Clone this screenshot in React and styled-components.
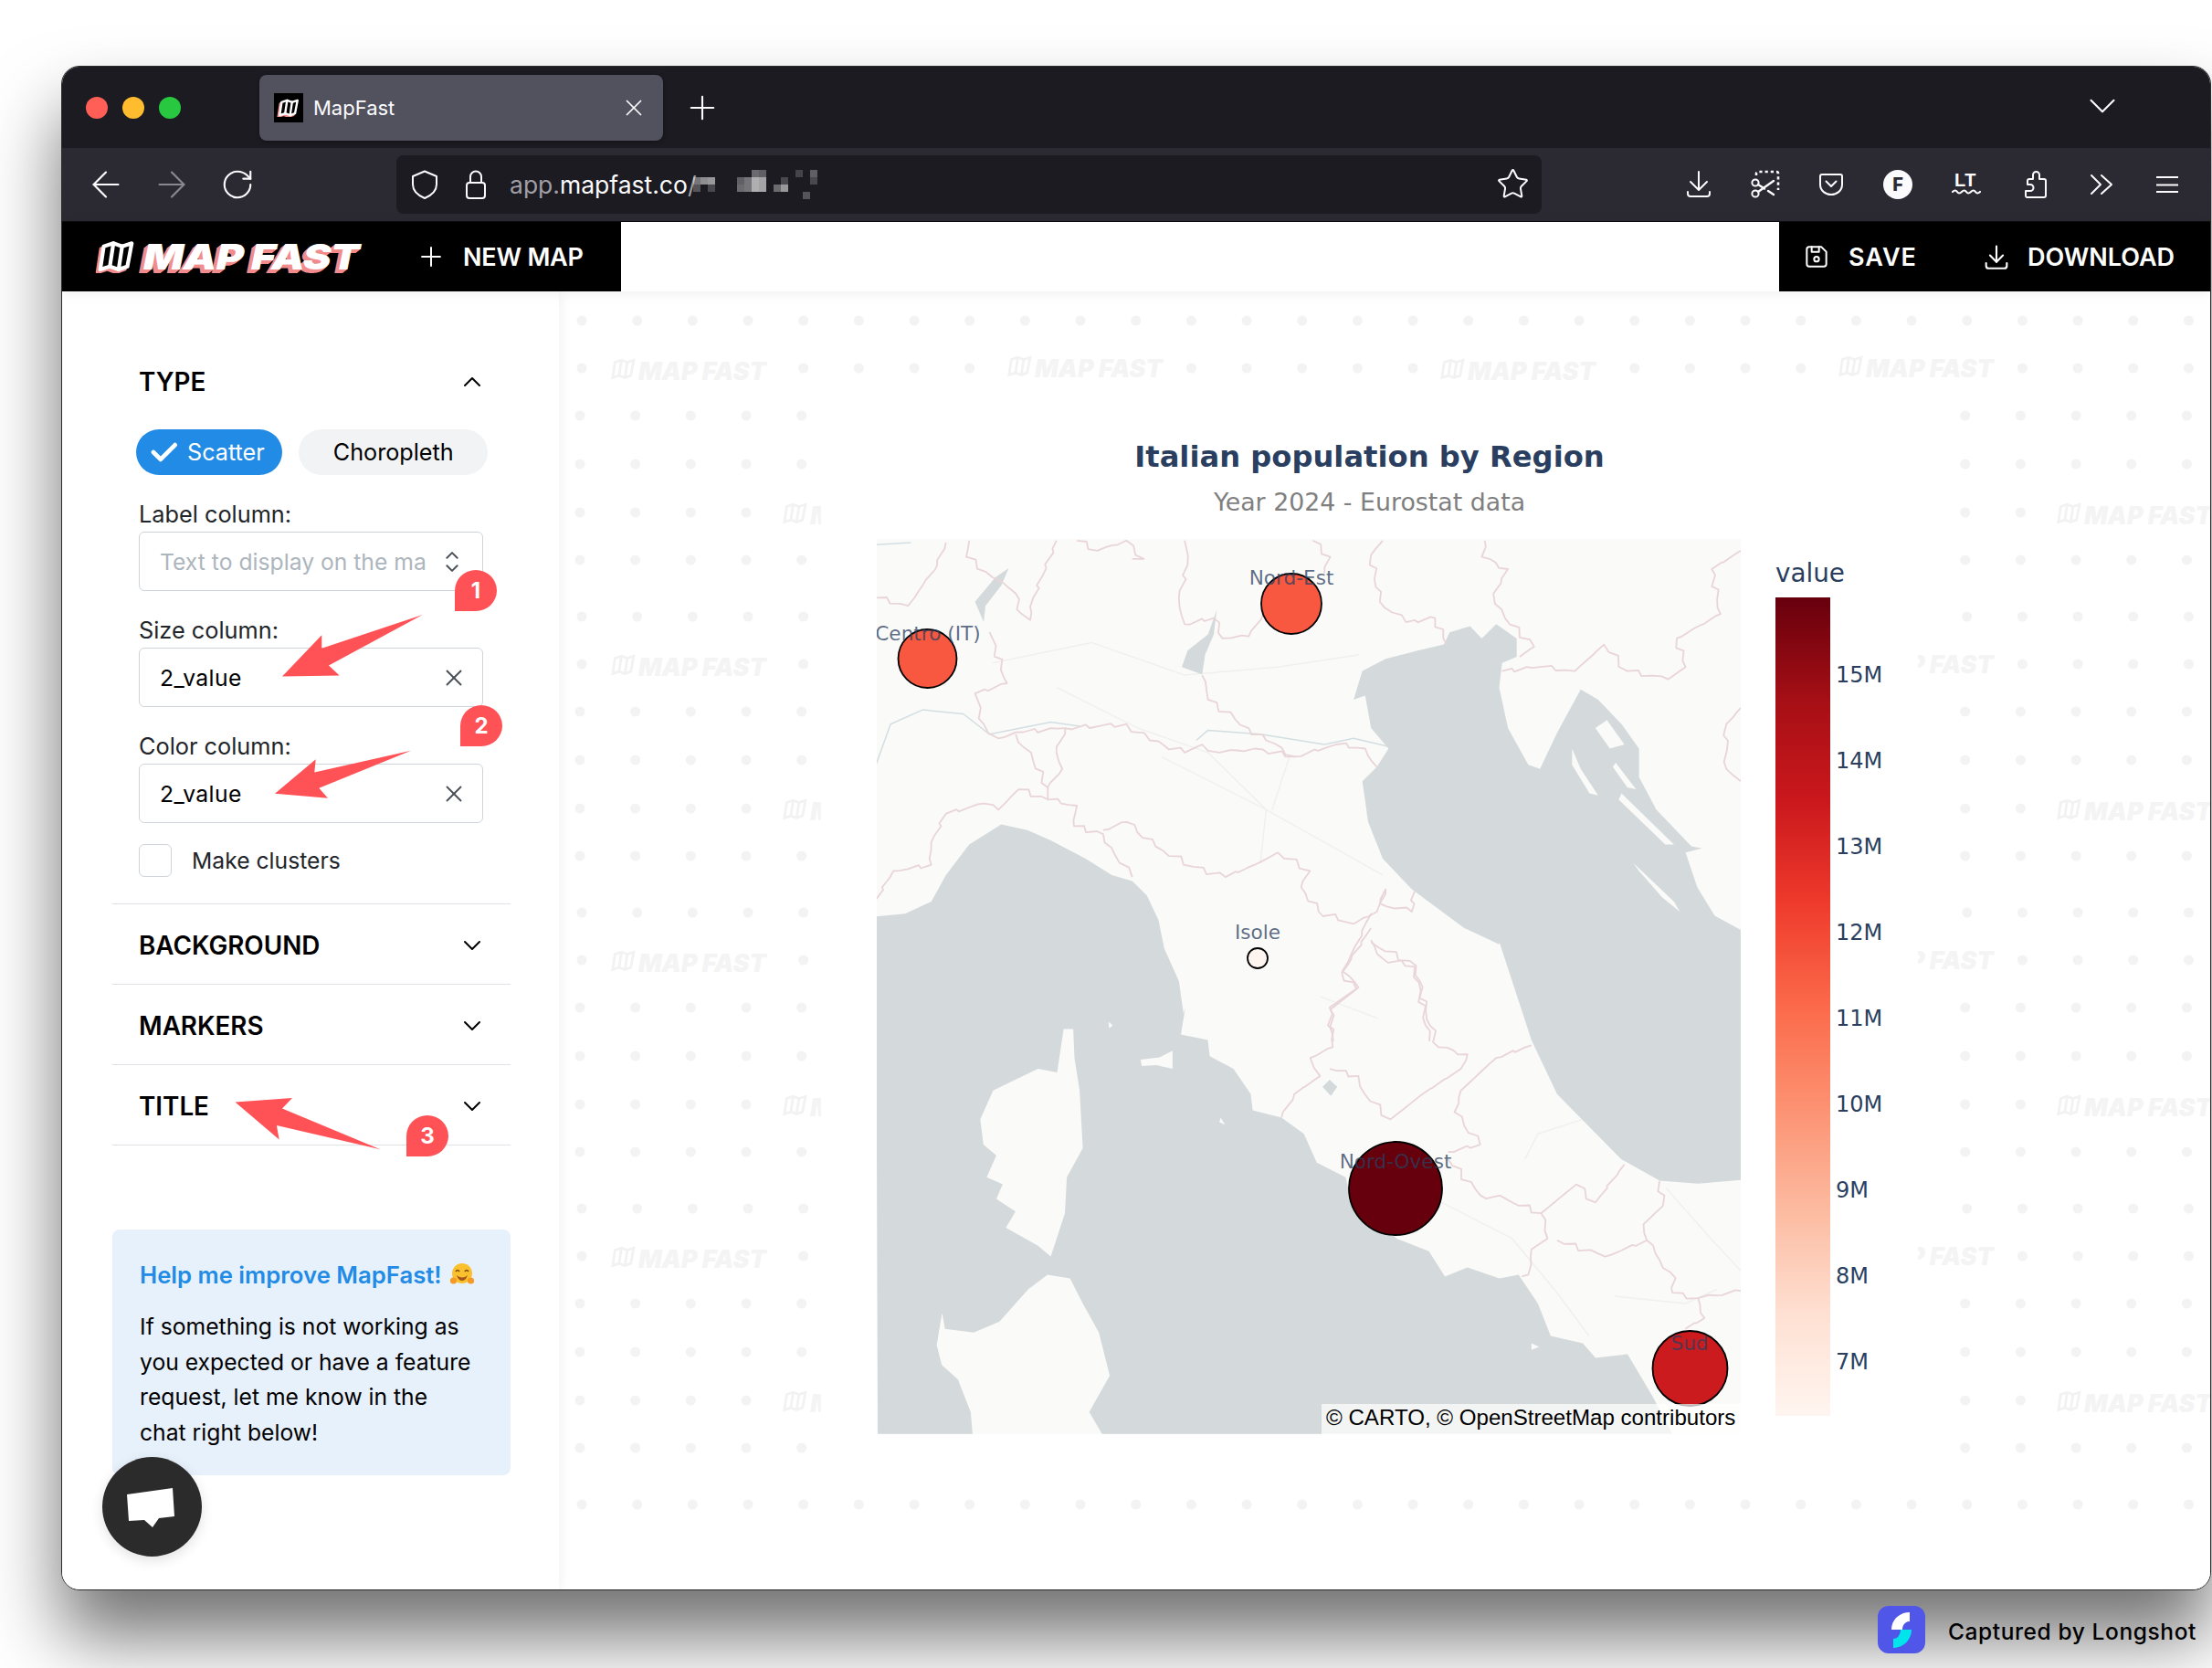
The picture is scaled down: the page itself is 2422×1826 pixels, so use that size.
import React from "react";
import styled, { createGlobalStyle } from "styled-components";
import {
  TbCheck,
  TbChevronDown,
  TbChevronUp,
  TbDeviceFloppy,
  TbDownload,
  TbPlus,
  TbSelector,
  TbX,
} from "react-icons/tb";
import { ArrowLeft, ArrowRight, ChevronDown, Plus, RotateCw, Star, X } from "lucide-react";

const GlobalStyle = createGlobalStyle`
  html, body {
    margin: 0;
    background: #fff;
    font-family: Inter, "Noto Sans", sans-serif;
  }
  * { box-sizing: border-box; }
  svg { flex: none; }
`;

/* ========== PAGE + BROWSER CHROME ========== */

const Page = styled.div`
  position: relative;
  width: 2422px;
  height: 1826px;
  padding: 72px 0 0 67px;
  overflow: hidden;
`;

const Window = styled.div`
  width: 2354px;
  height: 1669px;
  display: flex;
  flex-direction: column;
  border: 1px solid #2b2b2b;
  border-radius: 20px;
  overflow: hidden;
  background: #fff;
  box-shadow: 0 50px 80px rgba(0, 0, 0, 0.56);
`;

const TabBar = styled.div`
  height: 89px;
  flex: none;
  display: flex;
  align-items: center;
  padding-left: 26px;
  background: #1c1b22;
  color: #fbfbfe;
`;

const Light = styled.span`
  width: 24px;
  height: 24px;
  margin-right: 16px;
  border-radius: 50%;
  background: ${({ $color }) => $color};
`;

const Tab = styled.div`
  width: 442px;
  height: 72px;
  margin-left: 70px;
  padding: 1px 17px 0 16px;
  display: flex;
  align-items: center;
  gap: 11px;
  border-radius: 8px;
  background: #52525e;
  box-shadow: 0 1px 4px rgba(0, 0, 0, 0.4);
  font-size: 22px;
`;

const Favicon = styled.span`
  width: 32px;
  height: 32px;
  display: flex;
  align-items: center;
  justify-content: center;
  background: #000;
`;

const TabClose = styled.span`
  margin-left: auto;
  display: flex;
`;

const NewTab = styled.span`
  margin-left: 22px;
  display: flex;
`;

const TabList = styled.span`
  margin: -4px 93px 0 auto;
  display: flex;
`;

const NavBar = styled.div`
  height: 81px;
  flex: none;
  display: flex;
  align-items: center;
  padding: 0 11px 1px 33px;
  background: #2b2a33;
  border-bottom: 1px solid #0c0c0d;
  color: #fbfbfe;
`;

const NavButton = styled.span`
  width: 30px;
  margin-right: 42px;
  display: flex;
  justify-content: center;
  opacity: ${({ $dim }) => ($dim ? 0.45 : 1)};
`;

const UrlBar = styled.div`
  width: 1254px;
  height: 64px;
  margin-left: 117px;
  padding: 0 16px 0 16px;
  display: flex;
  align-items: center;
  border-radius: 8px;
  background: #1c1b22;
`;

const LockSlot = styled.span`
  display: flex;
  margin-left: 29px;
`;

const UrlText = styled.span`
  margin: 0 -11px 0 25px;
  font-size: 26.5px;
  color: #fbfbfe;
  white-space: nowrap;
`;

const UrlDim = styled.span`
  color: #9f9fa5;
`;

const StarSlot = styled.span`
  margin: 0 -3px 0 auto;
  display: flex;
`;

const ToolIcons = styled.div`
  margin-left: auto;
  display: flex;
  align-items: center;
`;

const ToolSlot = styled.span`
  width: ${({ $w }) => $w}px;
  display: flex;
  justify-content: center;
`;

const LtGlyph = styled.text`
  font-family: "Liberation Sans", sans-serif;
  font-size: 20px;
  font-weight: 700;
  letter-spacing: 0.6px;
  fill: #fbfbfe;
`;

const ProfileBadge = styled.span`
  width: 32px;
  height: 32px;
  display: flex;
  align-items: center;
  justify-content: center;
  border-radius: 50%;
  background: #fbfbfe;
  color: #2b2a33;
  font-size: 20px;
  font-weight: 800;
`;

/* ========== APP HEADER ========== */

const AppHeader = styled.div`
  height: 76px;
  flex: none;
  position: relative;
  z-index: 2;
  display: flex;
  justify-content: space-between;
  background: #fff;
  box-shadow: 0 2px 14px rgba(0, 0, 0, 0.07);
`;

const BlackBlock = styled.div`
  display: flex;
  align-items: center;
  width: ${({ $w }) => $w}px;
  background: #000;
  color: #fff;
  padding-left: ${({ $pad }) => $pad}px;
`;

const Logo = styled.div`
  width: 355px;
  display: flex;
  align-items: center;
  gap: 7px;
`;

const LogoText = styled.span`
  font-size: 38px;
  font-weight: 900;
  font-style: italic;
  letter-spacing: -0.6px;
  color: #fff;
  white-space: nowrap;
  transform: scaleX(1.22);
  transform-origin: left center;
  text-shadow: -1px 1px 0 #f28b8b, -2px 2px 0 #f28b8b, -3px 3px 0 #f28b8b, -4px 4px 0 #f28b8b;
`;

const HeaderAction = styled.span`
  display: flex;
  align-items: center;
  gap: ${({ $gap }) => $gap}px;
  margin-right: ${({ $mr }) => $mr || 0}px;
  font-size: 27px;
  font-weight: 600;
  letter-spacing: ${({ $ls }) => $ls || 0}px;
  white-space: nowrap;
  svg { margin: 0 -4px; }
`;

/* ========== SIDEBAR ========== */

const Body = styled.div`
  flex: 1;
  min-height: 0;
  display: flex;
`;

const Sidebar = styled.aside`
  position: relative;
  z-index: 1;
  width: 544px;
  flex: none;
  padding: 71px 53px 0 55px;
  background: #fff;
  box-shadow: 3px 0 12px rgba(0, 0, 0, 0.05);
  color: #000;
  font-size: 24.7px;
`;

const SectionHead = styled.div`
  height: ${({ $h }) => $h}px;
  display: flex;
  align-items: center;
  justify-content: space-between;
  padding: ${({ $line }) => ($line ? "2px" : "0")} 30px 0 29px;
  border-bottom: ${({ $line }) => ($line ? "1px solid #dee2e6" : "none")};
  font-size: 27.8px;
  font-weight: 600;
  svg { margin-right: -4px; }
`;

const SectionBody = styled.div`
  padding: 25px 30px 29px 29px;
  border-bottom: 1px solid #dee2e6;
`;

const Chips = styled.div`
  display: flex;
  gap: 18px;
  margin: 0 0 27px -3px;
`;

const Chip = styled.span`
  height: 50px;
  display: flex;
  align-items: center;
  gap: 14px;
  padding: ${({ $active }) => ($active ? "0 19px 0 18px" : "0 37px 0 38px")};
  border-radius: 25px;
  font-size: 25.2px;
  background: ${({ $active }) => ($active ? "#228be6" : "#f1f3f5")};
  color: ${({ $active }) => ($active ? "#fff" : "#000")};
  svg { margin: 0 -7px; }
`;

const Field = styled.div`
  margin-bottom: 27px;
`;

const FieldLabel = styled.div`
  height: 32px;
  margin-bottom: 3px;
  line-height: 32px;
  font-size: 25.3px;
  color: #212529;
`;

const FieldInput = styled.div`
  height: 65px;
  display: flex;
  align-items: center;
  justify-content: space-between;
  padding: 0 20px 0 22px;
  border: 1px solid #ced4da;
  border-radius: 6px;
  color: ${({ $empty }) => ($empty ? "#adb5bd" : "#000")};
  letter-spacing: ${({ $empty }) => ($empty ? 0 : 0.4)}px;
  svg { color: #495057; margin-right: -4px; }
`;

const CheckRow = styled.div`
  display: flex;
  align-items: center;
  gap: 22px;
  color: #212529;
  margin-top: -4px;
`;

const CheckBox = styled.span`
  width: 36px;
  height: 36px;
  border: 1px solid #ced4da;
  border-radius: 6px;
`;

const HelpBox = styled.div`
  height: 269px;
  margin-top: 92px;
  padding: 33px 40px 0 30px;
  border-radius: 8px;
  background: #e7f1fb;
`;

const HelpTitle = styled.div`
  display: flex;
  align-items: center;
  gap: 8px;
  height: 32px;
  color: #228be6;
  font-size: 25.7px;
  font-weight: 600;
  white-space: nowrap;
`;

const HelpText = styled.p`
  margin: 22px 0 0;
  line-height: 38.5px;
  color: #000;
`;

const ChatButton = styled.div`
  position: absolute;
  left: 44px;
  bottom: 36px;
  width: 109px;
  height: 109px;
  border-radius: 50%;
  background: #2b2b2b;
  box-shadow: 0 4px 14px rgba(0, 0, 0, 0.12);
`;

/* ========== CANVAS + PLOT ========== */

const Canvas = styled.main`
  position: relative;
  flex: 1;
  overflow: hidden;
  background: #fff;
`;

const CanvasPattern = styled.svg`
  position: absolute;
  inset: 0;
  width: 100%;
  height: 100%;
`;

const WatermarkText = styled.text`
  font-family: Inter, sans-serif;
  font-size: 26.8px;
  font-weight: 900;
  font-style: italic;
  fill: #f4f4f4;
`;

const PlotPanel = styled.div`
  position: relative;
  width: 1201px;
  height: 1190px;
  margin: 111px 0 0 287px;
  background: #fff;
`;

const PlotHeading = styled.div`
  height: 160px;
  padding-top: 50px;
  text-align: center;
  font-family: "DejaVu Sans", sans-serif;
`;

const PlotTitle = styled.div`
  line-height: 40px;
  font-size: 32.2px;
  font-weight: 700;
  color: #2a3f5f;
`;

const PlotSubtitle = styled.div`
  margin-top: 12px;
  line-height: 36px;
  font-size: 26.8px;
  color: #7f7f7f;
`;

const PlotRow = styled.div`
  display: flex;
  padding-left: 61px;
  gap: 38px;
`;

const MapFrame = styled.div`
  position: relative;
  width: 946px;
  height: 980px;
  background: #fafaf8;
  overflow: hidden;
`;

const MapLabel = styled.text`
  font-family: "DejaVu Sans", sans-serif;
  font-size: 21.6px;
  fill: #2a3f5f;
  fill-opacity: 0.75;
  text-anchor: middle;
  dominant-baseline: central;
`;

const Attribution = styled.div`
  position: absolute;
  right: 0;
  bottom: 0;
  width: 459px;
  height: 33px;
  padding: 0 0 0 5px;
  line-height: 30px;
  background: rgba(255, 255, 255, 0.72);
  color: #000;
  font-family: "Liberation Sans", sans-serif;
  font-size: 24.1px;
  white-space: nowrap;
`;

const Legend = styled.div`
  font-family: "DejaVu Sans", sans-serif;
  color: #2a3f5f;
`;

const LegendTitle = styled.div`
  height: 64px;
  padding-top: 19px;
  line-height: 38px;
  font-size: 27.8px;
`;

const LegendBody = styled.div`
  display: flex;
  gap: 6px;
`;

const ColorBar = styled.div`
  width: 60px;
  height: 896px;
  background: linear-gradient(
    to bottom,
    #67000d 0%,
    #a50f15 12.5%,
    #cb181d 25%,
    #ef3b2c 37.5%,
    #fb6a4a 50%,
    #fc9272 62.5%,
    #fcbba1 75%,
    #fee0d2 87.5%,
    #fff5f0 100%
  );
`;

const Ticks = styled.div`
  padding-top: 38px;
`;

const Tick = styled.div`
  height: 94px;
  line-height: 94px;
  font-size: 24px;
`;

/* ========== ANNOTATIONS + FOOTER ========== */

const Arrows = styled.svg`
  position: absolute;
  inset: 0;
  z-index: 5;
  pointer-events: none;
`;

const Pin = styled.span`
  position: absolute;
  z-index: 6;
  left: ${({ $x }) => $x}px;
  top: ${({ $y }) => $y}px;
  width: 46px;
  height: 45px;
  display: flex;
  align-items: center;
  justify-content: center;
  border-radius: 50% 50% 50% 0;
  background: #ff5257;
  color: #fff;
  font-size: 24px;
  font-weight: 700;
`;

const Footer = styled.div`
  display: flex;
  justify-content: flex-end;
  align-items: center;
  gap: 25px;
  padding: 17px 17px 0 0;
`;

const FooterText = styled.span`
  margin-top: 3px;
  font-size: 24.5px;
  font-weight: 500;
  letter-spacing: 0.6px;
  color: #000;
`;

/* ========== DRAWINGS ========== */

const MARK_OUTLINE = "M10 7l11-3.500L31 7l11-3.500L37 30l-10 3.500-10-3.500L6 33.500z";
const MARK_FOLDS = "M21 3.500L17 30M31 7l-4 26.500";

const MapMark = ({ width, fill, shadow, bg }) => (
  <svg width={width} viewBox="0 0 48 38" fill="none" strokeLinejoin="round" strokeLinecap="round">
    {shadow && <path d={MARK_OUTLINE} stroke={shadow} fill={shadow} strokeWidth="4.400" transform="translate(-3 3)" />}
    <path d={MARK_OUTLINE} stroke={fill} strokeWidth="4.400" fill={bg} />
    <path d={MARK_FOLDS} stroke={fill} strokeWidth="4.400" />
  </svg>
);

const HugIcon = () => (
  <svg width="28" height="26" viewBox="0 0 28 26">
    <circle cx="14" cy="12" r="11" fill="#fbc02d" />
    <path d="M7 10q2-3 4 0M17 10q2-3 4 0" stroke="#7a4a12" strokeWidth="1.6" fill="none" />
    <path d="M8 14q6 5 12 0q-2 6-6 6t-6-6z" fill="#a3541b" />
    <circle cx="4.5" cy="20" r="3.6" fill="#f59a23" />
    <circle cx="23.5" cy="20" r="3.6" fill="#f59a23" />
  </svg>
);

const ShieldIcon = () => (
  <svg width="30" height="32" viewBox="0 0 30 32" fill="none" stroke="#fbfbfe" strokeWidth="2" strokeLinejoin="round">
    <path d="M15 1.500L28 7v9c0 7-6 12-13 15C8 28 2 23 2 16V7z" />
  </svg>
);

const LockIcon = () => (
  <svg width="24" height="32" viewBox="0 0 24 32" fill="none" stroke="#fbfbfe" strokeWidth="2">
    <rect x="2" y="14" width="20" height="17" rx="3" />
    <path d="M6 14V7.500a6 6 0 0 1 12 0V14" />
  </svg>
);

const DownloadTool = () => (
  <svg width="28" height="31" viewBox="0 0 28 31" fill="none" stroke="#fbfbfe" strokeWidth="2" strokeLinecap="round" strokeLinejoin="round">
    <path d="M14 2v19M5 13l9 9 9-9M2 24v2a3 3 0 0 0 3 3h18a3 3 0 0 0 3-3v-2" />
  </svg>
);

const ScreenshotTool = () => (
  <svg width="33" height="31" viewBox="0 0 33 31" fill="none" stroke="#fbfbfe" strokeWidth="2" strokeLinecap="round">
    <path d="M7 6V4a2 2 0 0 1 2-2h20a2 2 0 0 1 2 2v18" strokeWidth="2.6" strokeDasharray="3.2 3" strokeLinecap="butt" />
    <circle cx="6" cy="14" r="3.6" />
    <circle cx="6" cy="26" r="3.6" />
    <path d="M9 24L26 12M9 16l7 4.500M20 23l6 4" strokeWidth="2.4" />
  </svg>
);

const PocketTool = () => (
  <svg width="28" height="26" viewBox="0 0 28 26" fill="none" stroke="#fbfbfe" strokeWidth="2" strokeLinecap="round" strokeLinejoin="round">
    <path d="M4 2h20a2 2 0 0 1 2 2v9c0 7-6 11-12 11S2 20 2 13V4a2 2 0 0 1 2-2z" />
    <path d="M8.500 9.500l5.500 5.500 5.500-5.500" />
  </svg>
);

const LtTool = () => (
  <svg width="32" height="26" viewBox="0 0 32 26" fill="none">
    <LtGlyph x="3" y="15">LT</LtGlyph>
    <path d="M1 21q3-3 5 0t5 0 5 0 5 0 5 0 5 0" stroke="#fbfbfe" strokeWidth="2.2" strokeLinecap="round" />
  </svg>
);

const PuzzleTool = () => (
  <svg width="26" height="32" viewBox="0 0 26 32" fill="none" stroke="#fbfbfe" strokeWidth="2" strokeLinejoin="round">
    <path d="M3 30h19a2 2 0 0 0 2-2V12a2 2 0 0 0-2-2h-5V5.500a3.500 3.500 0 1 0-7 0V10H6a2 2 0 0 0-2 2v4h3a3.500 3.500 0 0 1 0 7H2v5a2 2 0 0 0 1 2z" />
  </svg>
);

const OverflowTool = () => (
  <svg width="26" height="24" viewBox="0 0 26 24" fill="none" stroke="#fbfbfe" strokeWidth="2" strokeLinecap="round" strokeLinejoin="round">
    <path d="M2 2l10 10L2 22M13 2l11 10-11 10" />
  </svg>
);

const MenuTool = () => (
  <svg width="24" height="20" viewBox="0 0 24 20" stroke="#fbfbfe" strokeWidth="2">
    <path d="M0 2h24M0 10.500h24M0 18h24" />
  </svg>
);

const LongshotIcon = () => (
  <svg width="52" height="52" viewBox="0 0 52 52">
    <rect width="52" height="52" rx="12" fill="#4f56e8" />
    <path d="M35 7v10c-5 0-8 4-8 9H15C15 15 24 7 35 7z" fill="#fff" />
    <path d="M37 26c0 11-9 20-20 20V36c5 0 8-5 8-10z" fill="#00e5ec" />
  </svg>
);

/* url path is pixelated in the shot */
const MOSAIC = [
  [1, 1, 0.4], [1, 2, 0.25], [2, 1, 0.5], [3, 1, 0.55], [3, 2, 0.2],
  [7, 1, 0.3], [7, 2, 0.35], [8, 1, 0.4], [8, 2, 0.4], [9, 0, 0.35], [9, 1, 0.65], [9, 2, 0.65],
  [10, 0, 0.3], [10, 1, 0.6], [10, 2, 0.6], [12, 2, 0.35], [13, 1, 0.2], [13, 2, 0.55],
  [15, 0, 0.18], [16, 3, 0.25], [17, 0, 0.3], [17, 1, 0.2],
];

const UrlMosaic = () => (
  <svg width="144" height="32" viewBox="0 0 144 32">
    {MOSAIC.map(([c, r, o]) => (
      <rect key={`${c}-${r}`} x={c * 8} y={r * 8} width="8" height="8" fill="#fff" opacity={o} />
    ))}
  </svg>
);

/* background dots + watermark, canvas origin is 612,319 */
const DOT_STEP = 60.67;
const ROW_OFFSETS = [0, 52, 104, 157, 210, 262];
const WATERMARKS = [
  [667, 403], [1101, 400], [1575, 403], [2011, 400],
  [855, 561], [2250, 561],
  [667, 727], [2011, 724], [855, 885], [2250, 885],
  [667, 1051], [2011, 1048], [855, 1209], [2250, 1209],
  [667, 1375], [2011, 1372], [855, 1533], [2250, 1533],
];

const isCovered = (x, y) =>
  WATERMARKS.some(([wx, wy]) => Math.abs(y - wy) < 20 && x > wx - 20 && x < wx + 196);

const buildDots = () => {
  const dots = [];
  [351, 675, 999, 1323, 1647].forEach((base) => {
    ROW_OFFSETS.forEach((off, i) => {
      if (base === 1647 && i > 0) return;
      const y = base + off;
      const startX = i < 2 ? 637 : 635;
      for (let c = 0; c < 30; c++) {
        const x = startX + c * DOT_STEP;
        if (!isCovered(x, y)) dots.push([x - 612, y - 319]);
      }
    });
  });
  return dots;
};

const CanvasBackdrop = () => (
  <CanvasPattern>
    {buildDots().map(([x, y]) => (
      <circle key={`${x}-${y}`} cx={x} cy={y} r="5.500" fill="#f3f3f3" />
    ))}
    {WATERMARKS.map(([x, y]) => (
      <g key={`${x}-${y}`} transform={`translate(${x - 612} ${y - 319})`} fill="none" stroke="#f2f2f2" strokeWidth="4.400">
        <g transform="translate(0 -11) scale(0.64)">
          <path d={MARK_OUTLINE} />
          <path d={MARK_FOLDS} />
        </g>
        <WatermarkText x="32" y="13" stroke="none">MAP FAST</WatermarkText>
      </g>
    ))}
  </CanvasPattern>
);

/* map shapes are traced from two crops of the shot, so two scales */
const north = (pts) => pts.map(([x, y]) => [x / 1.568 - 20, y / 2.24 - 150]);
const south = (pts) => pts.map(([x, y]) => [x / 1.425 - 20, y / 2.529 + 410]);
const toD = (pts, close) =>
  "M" + pts.map(([x, y]) => `${x.toFixed(1)} ${y.toFixed(1)}`).join("L") + (close ? "Z" : "");

/* region borders are jagged in the tiles */
const wiggle = (pts) => {
  const out = [];
  pts.forEach(([x, y], i) => {
    out.push([x, y]);
    if (i === pts.length - 1) return;
    const [nx, ny] = pts[i + 1];
    const steps = Math.max(1, Math.round(Math.hypot(nx - x, ny - y) / 9));
    for (let s = 1; s < steps; s++) {
      const t = s / steps;
      const j = Math.sin(s * 2.4 + i * 1.7 + x) * 3.2;
      out.push([x + (nx - x) * t + j, y + (ny - y) * t - j * 0.8]);
    }
  });
  return out;
};

const TYRRHENIAN = [
  ...north([
    [30, 1262], [80, 1255], [125, 1225], [150, 1160], [190, 1085], [245, 1036], [290, 1050], [330, 1075], [390, 1120],
    [435, 1160], [470, 1175], [495, 1210], [515, 1270], [525, 1340], [550, 1420], [558, 1500],
  ]),
  ...south([
    [510, 260], [503, 335], [545, 350], [548, 395], [585, 430], [612, 500], [615, 545], [660, 565], [695, 610], [715, 690],
    [760, 730], [770, 800], [840, 900], [890, 935], [915, 1005], [950, 980], [1000, 1010], [1030, 1000], [1060, 1080],
    [1080, 1170], [1130, 1190], [1150, 1230], [1200, 1220], [1240, 1340], [1270, 1441], [380, 1441], [360, 1380],
    [392, 1280], [375, 1160], [350, 1080], [330, 1010], [295, 1000], [265, 1040], [220, 1130], [180, 1160], [135, 1150],
    [130, 1100], [150, 1055], [130, 1110], [122, 1195], [130, 1250], [155, 1290], [175, 1380], [178, 1441], [30, 1441],
  ]),
];

const ADRIATIC = [
  ...south([
    [1377, 738], [1310, 748], [1250, 740], [1190, 680], [1090, 500], [1050, 350], [1000, 80],
  ]),
  ...north([
    [1100, 1330], [1040, 1290], [950, 1195], [900, 1120], [875, 1030], [865, 930], [890, 895], [910, 850], [880, 800],
    [870, 720], [850, 730], [865, 660], [905, 630], [960, 610], [1005, 595], [1015, 565], [1050, 550], [1070, 580],
    [1095, 545], [1130, 580], [1130, 625], [1105, 640], [1100, 700], [1115, 800], [1150, 890], [1170, 900], [1200, 810],
    [1240, 705], [1270, 730], [1310, 790], [1340, 850], [1340, 920], [1370, 1000], [1430, 1090], [1448, 1095], [1420, 1105],
    [1440, 1190], [1470, 1260], [1515, 1295], [1515, 1568],
  ]),
];

const LAND_ISLANDS = [
  north([[1225, 850], [1240, 900], [1270, 965], [1255, 960], [1225, 890]]),
  north([[1300, 885], [1335, 950], [1320, 945], [1295, 895]]),
  north([[1310, 960], [1400, 1085], [1385, 1085], [1305, 975]]),
  north([[1330, 1130], [1400, 1225], [1410, 1250], [1380, 1215], [1340, 1150]]),
  north([[1265, 800], [1285, 780], [1315, 840], [1290, 850]]),
  south([[320, 320], [335, 320], [337, 400], [345, 490], [350, 650], [325, 730], [322, 830], [300, 950], [280, 920], [230, 870], [245, 825], [215, 790], [225, 750], [200, 730], [215, 670], [195, 640], [190, 570], [210, 490], [280, 430], [310, 440]]),
  south([[440, 405], [470, 398], [490, 380], [490, 430], [465, 420], [442, 422]]),
  south([[565, 565], [572, 585], [563, 578]]),
  south([[390, 300], [397, 310], [391, 318]]),
  south([[1050, 1190], [1062, 1200], [1050, 1208]]),
];

const LAKES = [
  north([[615, 510], [600, 570], [565, 610], [555, 650], [590, 668], [595, 620], [610, 570]]),
  north([[258, 408], [235, 430], [200, 490], [215, 540], [218, 500], [245, 450]]),
  south([[735, 460], [747, 480], [737, 505], [724, 480]]),
];

const BORDERS = [
  north([[30, 480], [85, 500], [110, 450], [135, 400], [150, 345]]),
  north([[190, 340], [185, 380], [230, 430], [270, 470], [280, 520], [295, 535], [300, 480], [340, 340]]),
  north([[375, 340], [410, 365], [460, 340], [490, 385], [470, 385]]),
  north([[560, 340], [565, 400], [550, 480], [560, 545], [610, 530], [625, 580], [670, 575], [695, 520]]),
  north([[780, 340], [810, 380], [800, 420]]),
  north([[900, 340], [880, 375], [895, 490], [940, 540], [990, 530], [1010, 595]]),
  north([[1075, 340], [1070, 380], [1115, 410], [1090, 470], [1110, 530], [1160, 600], [1135, 625]]),
  north([[1105, 660], [1170, 650], [1230, 660], [1280, 595], [1320, 660], [1390, 680], [1420, 650], [1405, 580], [1480, 520], [1465, 410], [1515, 365]]),
  north([[1515, 750], [1490, 790], [1490, 900], [1515, 930]]),
  north([[225, 565], [255, 690], [200, 715], [215, 790], [240, 825], [270, 810], [355, 800], [460, 790], [500, 830], [560, 860], [590, 840], [620, 860], [680, 850], [750, 870], [820, 840], [870, 850], [890, 895]]),
  north([[590, 670], [600, 730], [670, 800], [700, 830], [750, 870]]),
  north([[270, 815], [300, 880], [325, 945], [350, 900], [340, 860], [355, 800]]),
  north([[325, 945], [325, 975], [275, 950], [240, 1000], [215, 985], [150, 1010], [125, 1080], [125, 1135], [60, 1150], [30, 1220]]),
  north([[325, 975], [375, 990], [370, 1040], [420, 1060], [440, 1110], [470, 1165]]),
  north([[420, 1050], [460, 1030], [510, 1090], [575, 1140], [630, 1165], [680, 1135], [720, 1105], [775, 1150], [760, 1190], [790, 1250], [850, 1280], [890, 1250], [905, 1195], [895, 1230], [950, 1250], [955, 1200]]),
  north([[880, 1290], [830, 1400], [855, 1440], [810, 1490], [815, 1568]]),
  north([[880, 1320], [900, 1365], [955, 1385], [980, 1568]]),
  south([[800, 0], [775, 90], [755, 160], [780, 205], [735, 260], [740, 370], [705, 400], [720, 450], [680, 500], [660, 565]]),
  south([[800, 80], [870, 145], [885, 270], [905, 370], [950, 390], [940, 430], [880, 500], [830, 570], [790, 500], [780, 450], [735, 430]]),
  south([[1050, 365], [995, 400], [970, 440], [940, 490], [930, 550], [970, 640], [920, 660]]),
  south([[920, 680], [970, 780], [1010, 790], [1065, 830], [1120, 750], [1150, 800], [1195, 695]]),
  south([[1065, 830], [1075, 900], [1050, 930], [1045, 1000], [1035, 1005]]),
  south([[1090, 905], [1165, 950], [1230, 905], [1250, 960], [1275, 1010], [1270, 1050], [1310, 1065], [1377, 1045]]),
  south([[1250, 740], [1255, 810], [1225, 860], [1230, 905]]),
  south([[1310, 1065], [1320, 1120], [1290, 1150]]),
];

const ROADS = [
  north([[230, 640], [400, 590], [560, 670], [720, 650], [860, 620]]),
  north([[340, 700], [480, 800], [600, 860], [700, 1000], [690, 1130]]),
  north([[520, 870], [700, 1000], [900, 1160]]),
  north([[740, 870], [710, 1000]]),
  south([[720, 230], [810, 290]]),
  south([[910, 800], [1020, 900], [1090, 1050], [1140, 1170]]),
  south([[1040, 680], [1060, 610], [1130, 570]]),
  south([[1260, 760], [1330, 900], [1377, 990]]),
  south([[1180, 1060], [1290, 1080], [1340, 1040]]),
];

const RIVERS = [
  north([[30, 890], [55, 790], [110, 755], [180, 765], [225, 815], [330, 785], [380, 795]]),
  north([[580, 830], [600, 805], [690, 815], [800, 840], [850, 825], [910, 845]]),
  north([[30, 350], [90, 345]]),
];

const MARKERS = [
  { cx: 55.5, cy: 131, r: 32, fill: "#f7583f" },
  { cx: 454, cy: 71, r: 33, fill: "#f7583f" },
  { cx: 417, cy: 459, r: 11, fill: "#fff5f0" },
  { cx: 568, cy: 711, r: 51, fill: "#67000d" },
  { cx: 890.5, cy: 908, r: 41, fill: "#cb1b1e" },
];

const MAP_LABELS = [
  { x: 56, y: 103, text: "Centro (IT)" },
  { x: 454, y: 42, text: "Nord-Est" },
  { x: 417, y: 430, text: "Isole" },
  { x: 568, y: 681, text: "Nord-Ovest" },
  { x: 890, y: 880, text: "Sud" },
];

const ItalyMap = () => (
  <svg width="946" height="980" viewBox="0 0 946 980" fill="none" strokeLinejoin="round">
    {ROADS.map((pts, i) => (
      <path key={i} d={toD(pts)} stroke="#f0f0ed" strokeWidth="1.500" />
    ))}
    {RIVERS.map((pts, i) => (
      <path key={i} d={toD(pts)} stroke="#d3dee3" strokeWidth="1.500" />
    ))}
    <path d={toD(TYRRHENIAN, true)} fill="#d4d9dc" />
    <path d={toD(ADRIATIC, true)} fill="#d4d9dc" />
    {LAND_ISLANDS.map((pts, i) => (
      <path key={i} d={toD(pts, true)} fill="#fafaf8" />
    ))}
    {LAKES.map((pts, i) => (
      <path key={i} d={toD(pts, true)} fill="#d4d9dc" />
    ))}
    {BORDERS.map((pts, i) => (
      <path key={i} d={toD(wiggle(pts))} stroke="#e9d5d7" strokeWidth="1.800" />
    ))}
    {MARKERS.map((m) => (
      <circle key={m.cx} cx={m.cx} cy={m.cy} r={m.r} fill={m.fill} stroke="#000" strokeWidth="1.800" />
    ))}
    {MAP_LABELS.map((l) => (
      <MapLabel key={l.text} x={l.x} y={l.y}>
        {l.text}
      </MapLabel>
    ))}
  </svg>
);

const TICK_LABELS = ["15M", "14M", "13M", "12M", "11M", "10M", "9M", "8M", "7M"];

/* ========== COMPONENT ========== */

const App = () => (
  <Page>
    <GlobalStyle />
    <Window>
      <TabBar>
        <Light $color="#ff5f57" />
        <Light $color="#febc2e" />
        <Light $color="#28c840" />
        <Tab>
          <Favicon>
            <MapMark width={26} fill="#fff" shadow="#f28b8b" bg="#000" />
          </Favicon>
          MapFast
          <TabClose>
            <X size={30} strokeWidth={1.4} />
          </TabClose>
        </Tab>
        <NewTab>
          <Plus size={42} strokeWidth={1.2} />
        </NewTab>
        <TabList>
          <ChevronDown size={50} strokeWidth={1} />
        </TabList>
      </TabBar>

      <NavBar>
        <NavButton>
          <ArrowLeft size={46} strokeWidth={1.15} />
        </NavButton>
        <NavButton $dim>
          <ArrowRight size={46} strokeWidth={1.15} />
        </NavButton>
        <NavButton>
          <RotateCw size={38} strokeWidth={1.35} />
        </NavButton>
        <UrlBar>
          <ShieldIcon />
          <LockSlot>
            <LockIcon />
          </LockSlot>
          <UrlText>
            <UrlDim>app.</UrlDim>mapfast.co<UrlDim>/</UrlDim>
          </UrlText>
          <UrlMosaic />
          <StarSlot>
            <Star size={37} strokeWidth={1.3} />
          </StarSlot>
        </UrlBar>
        <ToolIcons>
          <ToolSlot $w={72.5}><DownloadTool /></ToolSlot>
          <ToolSlot $w={72.5}><ScreenshotTool /></ToolSlot>
          <ToolSlot $w={72}><PocketTool /></ToolSlot>
          <ToolSlot $w={74}><ProfileBadge>F</ProfileBadge></ToolSlot>
          <ToolSlot $w={76.5}><LtTool /></ToolSlot>
          <ToolSlot $w={74}><PuzzleTool /></ToolSlot>
          <ToolSlot $w={71.5}><OverflowTool /></ToolSlot>
          <ToolSlot $w={72}><MenuTool /></ToolSlot>
        </ToolIcons>
      </NavBar>

      <AppHeader>
        <BlackBlock $w={612} $pad={36}>
          <Logo>
            <MapMark width={46} fill="#fff" shadow="#f28b8b" bg="#000" />
            <LogoText>MAP FAST</LogoText>
          </Logo>
          <HeaderAction $gap={22} $ls={-0.2}>
            <TbPlus size={34} strokeWidth={1.4} />
            NEW MAP
          </HeaderAction>
        </BlackBlock>
        <BlackBlock $w={472} $pad={29}>
          <HeaderAction $gap={23} $mr={74} $ls={1}>
            <TbDeviceFloppy size={32} strokeWidth={1.5} />
            SAVE
          </HeaderAction>
          <HeaderAction $gap={21}>
            <TbDownload size={34} strokeWidth={1.5} />
            DOWNLOAD
          </HeaderAction>
        </BlackBlock>
      </AppHeader>

      <Body>
        <Sidebar>
          <SectionHead $h={55}>
            TYPE
            <TbChevronUp size={32} strokeWidth={1.5} />
          </SectionHead>
          <SectionBody>
            <Chips>
              <Chip $active>
                <TbCheck size={38} strokeWidth={3} />
                Scatter
              </Chip>
              <Chip>Choropleth</Chip>
            </Chips>
            <Field>
              <FieldLabel>Label column:</FieldLabel>
              <FieldInput $empty>
                Text to display on the ma
                <TbSelector size={34} strokeWidth={1.4} />
              </FieldInput>
            </Field>
            <Field>
              <FieldLabel>Size column:</FieldLabel>
              <FieldInput>
                2_value
                <TbX size={30} strokeWidth={1.5} />
              </FieldInput>
            </Field>
            <Field>
              <FieldLabel>Color column:</FieldLabel>
              <FieldInput>
                2_value
                <TbX size={30} strokeWidth={1.5} />
              </FieldInput>
            </Field>
            <CheckRow>
              <CheckBox />
              Make clusters
            </CheckRow>
          </SectionBody>
          <SectionHead $h={88} $line>
            BACKGROUND
            <TbChevronDown size={32} strokeWidth={1.5} />
          </SectionHead>
          <SectionHead $h={88} $line>
            MARKERS
            <TbChevronDown size={32} strokeWidth={1.5} />
          </SectionHead>
          <SectionHead $h={88} $line>
            TITLE
            <TbChevronDown size={32} strokeWidth={1.5} />
          </SectionHead>
          <HelpBox>
            <HelpTitle>
              Help me improve MapFast!
              <HugIcon />
            </HelpTitle>
            <HelpText>
              If something is not working as you expected or have a feature request, let me know in the chat right below!
            </HelpText>
          </HelpBox>
          <ChatButton>
            <svg width="109" height="109" viewBox="0 0 109 109">
              <path d="M27 41l50-7 2 31-17 2-7 10-9-8-17 1z" fill="#fff" />
            </svg>
          </ChatButton>
        </Sidebar>

        <Canvas>
          <CanvasBackdrop />
          <PlotPanel>
            <PlotHeading>
              <PlotTitle>Italian population by Region</PlotTitle>
              <PlotSubtitle>Year 2024 - Eurostat data</PlotSubtitle>
            </PlotHeading>
            <PlotRow>
              <MapFrame>
                <ItalyMap />
                <Attribution>© CARTO, © OpenStreetMap contributors</Attribution>
              </MapFrame>
              <Legend>
                <LegendTitle>value</LegendTitle>
                <LegendBody>
                  <ColorBar />
                  <Ticks>
                    {TICK_LABELS.map((t) => (
                      <Tick key={t}>{t}</Tick>
                    ))}
                  </Ticks>
                </LegendBody>
              </Legend>
            </PlotRow>
          </PlotPanel>
        </Canvas>
      </Body>
    </Window>

    <Footer>
      <LongshotIcon />
      <FooterText>Captured by Longshot</FooterText>
    </Footer>

    <Arrows width="2422" height="1826" viewBox="0 0 2422 1826" fill="#ff5257">
      <path d="M309 740.600L352.300 695.200L352.300 709.800L462.700 673L360 728.400L371.700 739.400Z" />
      <path d="M301 868.700L345.700 831.200L344.300 845.400L450 821.700L349.300 862.800L359 873.800Z" />
      <path d="M257.500 1206.400L320 1202L309 1213.600L416.400 1258.200L302.900 1232L305.700 1247.600Z" />
    </Arrows>
    <Pin $x={498} $y={624}>1</Pin>
    <Pin $x={504} $y={772}>2</Pin>
    <Pin $x={445} $y={1221}>3</Pin>
  </Page>
);

export default App;
